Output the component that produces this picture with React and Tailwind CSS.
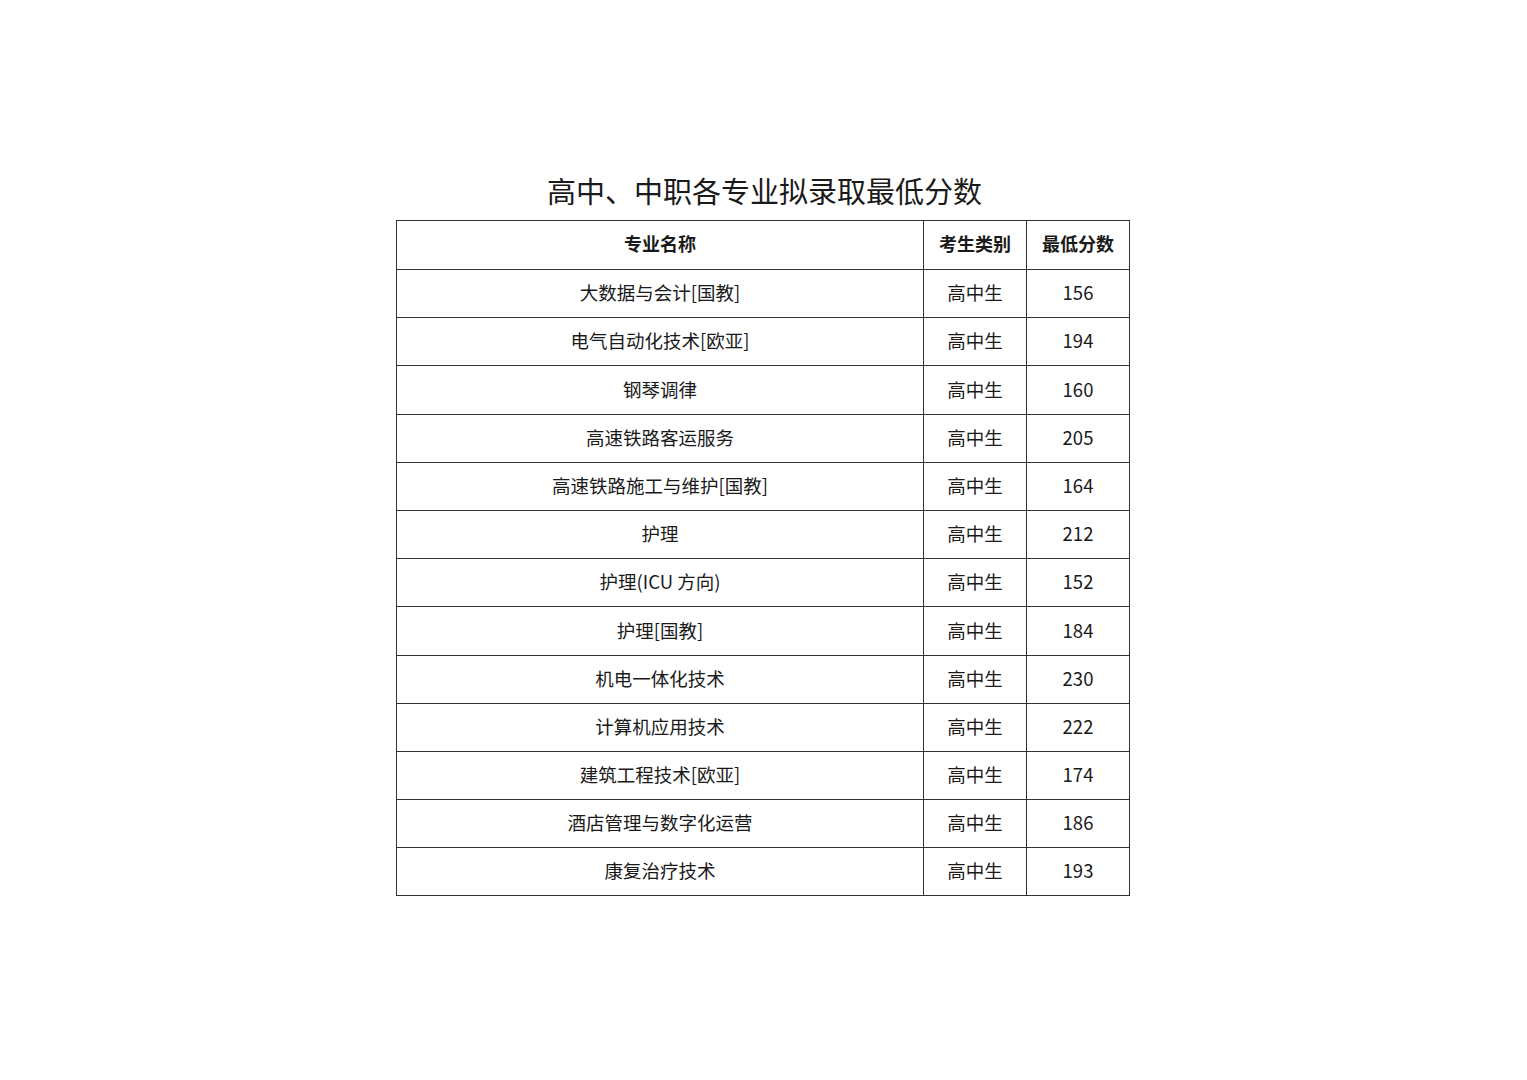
export default function App() {
  const rows = [
    ["大数据与会计[国教]", "156"],
    ["电气自动化技术[欧亚]", "194"],
    ["钢琴调律", "160"],
    ["高速铁路客运服务", "205"],
    ["高速铁路施工与维护[国教]", "164"],
    ["护理", "212"],
    ["护理(ICU 方向)", "152"],
    ["护理[国教]", "184"],
    ["机电一体化技术", "230"],
    ["计算机应用技术", "222"],
    ["建筑工程技术[欧亚]", "174"],
    ["酒店管理与数字化运营", "186"],
    ["康复治疗技术", "193"],
  ];
  return (
    <div
      className="w-[1527px] h-[1080px] bg-white text-[#1a1a1a]"
      style={{ fontFamily: '"Noto Sans CJK SC", "Noto Sans", sans-serif' }}
    >
      <div className="pt-[170px] flex flex-col items-center">
        <div className="h-[50px] pb-[10px] flex items-center justify-center text-[29px] leading-none pl-[2px]">
          高中、中职各专业拟录取最低分数
        </div>
        <table className="border-collapse border border-[#333] ml-[-1px]">
          <thead>
            <tr className="h-[49px]">
              <th className="w-[527px] border border-[#333] text-[18px] font-bold p-0 pb-[3px]">专业名称</th>
              <th className="w-[103px] border border-[#333] text-[18px] font-bold p-0 pb-[3px]">考生类别</th>
              <th className="w-[103px] border border-[#333] text-[18px] font-bold p-0 pb-[3px]">最低分数</th>
            </tr>
          </thead>
          <tbody>
            {rows.map(([name, score]) => (
              <tr key={name} className="h-[48.2px]">
                <td className="border border-[#333] text-center text-[18.5px] p-0 pb-[1px]">{name}</td>
                <td className="border border-[#333] text-center text-[18.5px] p-0 pb-[1px]">高中生</td>
                <td className="border border-[#333] text-center text-[18.5px] p-0 pb-[1px]">{score}</td>
              </tr>
            ))}
          </tbody>
        </table>
      </div>
    </div>
  );
}
